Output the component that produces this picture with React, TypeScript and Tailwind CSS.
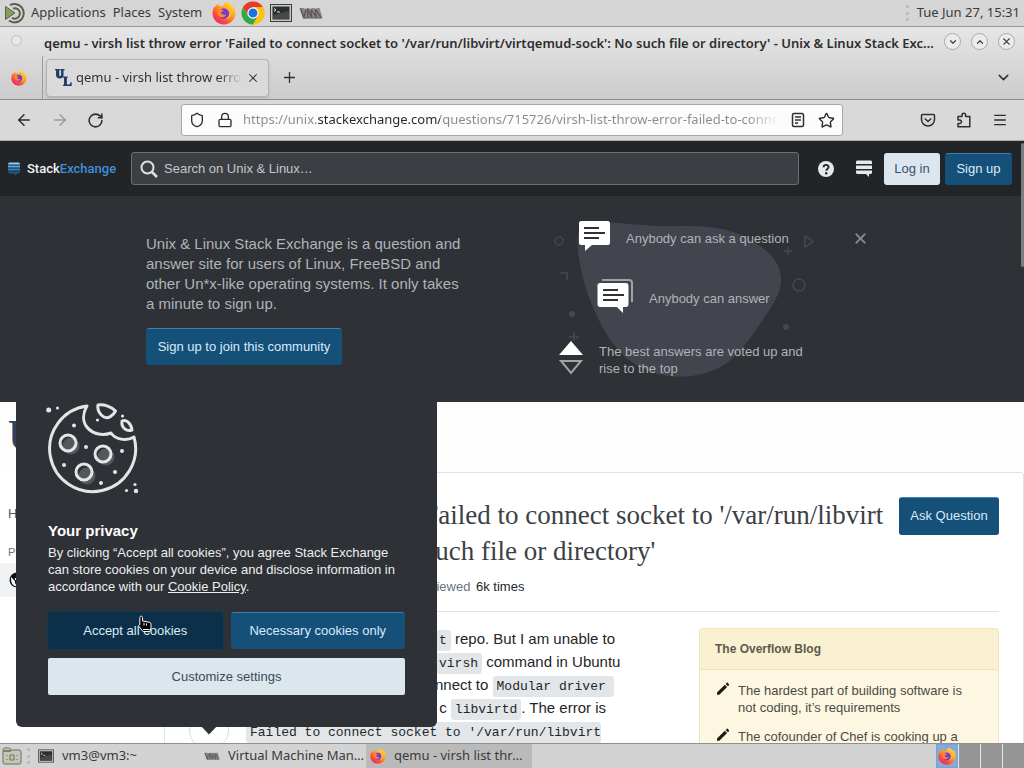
import type { ReactNode } from "react";
import {
  ArrowLeft,
  ArrowRight,
  ChevronDown,
  ChevronUp,
  Lock,
  Menu,
  Plus,
  RotateCw,
  Shield,
  Star,
  X,
} from "lucide-react";

const PAGE_FONT = "font-['Liberation_Sans',Arial,sans-serif]";
const CODE =
  "rounded-[3px] bg-[#e3e6e8] py-[3px] pl-1 font-['Liberation_Mono',monospace] text-[13px] leading-none text-[#232629]";
const PRIMARY =
  "rounded-[3px] border border-[#155079] border-t-[#3d7fae] bg-[#155079] text-[13px] text-[#d9eaf7] whitespace-nowrap";

function FirefoxIcon({ className }: { className?: string }) {
  return (
    <svg viewBox="0 0 24 24" className={className} aria-hidden="true">
      <defs>
        <linearGradient id="ffOuter" x1="0.85" y1="0.1" x2="0.2" y2="0.95">
          <stop offset="0" stopColor="#ffde3c" />
          <stop offset="0.4" stopColor="#ff9a25" />
          <stop offset="0.75" stopColor="#ff4a3d" />
          <stop offset="1" stopColor="#e8227d" />
        </linearGradient>
      </defs>
      <path
        d="M15.2 0.6c1.2 1.6 4.2 3.1 5.6 5.3 0-.9-.2-1.6-.5-2.2 2.1 2.1 3.2 5.2 3.2 8.4 0 6.4-5 11.4-11.5 11.4S.5 18.500.5 12.300c0-3 1-5.600 2.800-7.700 0 .6 0 1.200.2 1.700.6-1.700 1.500-3 2.700-3.700.1 1 .5 1.900 1 2.500 1.200-.4 2.500-.3 3.700.1C11.600 3.400 13.200 1.500 15.200.6z"
        fill="url(#ffOuter)"
      />
      <circle cx="12" cy="12.500" r="5.300" fill="#7a3bd0" />
      <path d="M5.500 9.500c2-1.700 4.500-1.200 6.300.6-1.500.2-2.300.8-3 1.700 1 2 3.200 2.600 5.400 1.600-.7 2.300-3.200 3.300-5.600 2.600-2.400-.7-3.700-3.600-3.100-6.500z" fill="#ff8a2a" />
      <path d="M12.500 7.200c2.600.3 4.600 2.300 4.800 5 .1 2.600-1.700 5-4.500 5.400 3.800.6 7-2 7-5.600 0-3.200-3.500-5.500-7.300-4.800z" fill="#ffb52e" />
    </svg>
  );
}

function ChromeIcon() {
  return (
    <svg viewBox="0 0 24 24" className="size-6" aria-hidden="true">
      <circle cx="12" cy="12" r="11.500" fill="#fbc116" />
      <path d="M2 6.300A11.500 11.500 0 0 1 22 6.300H12L7 14.800z" fill="#e33b2e" />
      <path d="M2 6.300A11.500 11.500 0 0 0 12 23.500l5-8.600-10 0z" fill="#2da94f" />
      <path d="M12 6.300H22A11.500 11.500 0 0 1 12 23.500l5-8.700z" fill="#fbc116" />
      <circle cx="12" cy="12" r="5.700" fill="#fff" />
      <circle cx="12" cy="12" r="4.500" fill="#1f6fe0" />
    </svg>
  );
}

function TerminalIcon({ className }: { className?: string }) {
  return (
    <svg viewBox="0 0 22 18" className={className} aria-hidden="true">
      <rect x="0.500" y="0.500" width="21" height="17" fill="#c9cbc7" stroke="#3c3e3b" />
      <rect x="2.500" y="2.500" width="17" height="13" fill="#2a2f2e" />
      <path d="M3 11l16-4v8H3z" fill="#454a49" />
      <path d="M4 4.500l2 1.500-2 1.500M7 8h3" stroke="#e8e8e8" strokeWidth="1" fill="none" />
    </svg>
  );
}

function VmmIcon({ className }: { className?: string }) {
  return (
    <svg viewBox="0 0 24 12" className={className} aria-hidden="true">
      <path d="M0.500 1h5l1 5 1-5h3l2 5V1h3l2 4V1h3l3 10H3.800z" fill="#8b8488" />
      <path d="M1.500 1.500l3.500 9 2-8.500M9 10.500L8.500 2l4 8L12 2l5 8-.5-8 5 8" stroke="#5b565d" strokeWidth="1.300" fill="none" />
      <path d="M4 11h19" stroke="#5d585c" />
    </svg>
  );
}

function MateIcon() {
  return (
    <svg viewBox="0 0 22 22" className="size-[22px]" fill="none" aria-hidden="true">
      <path d="M6 3.200A9.200 9.200 0 1 1 5 18.500" stroke="#56604a" strokeWidth="2" />
      <path d="M9 6.500A5.200 5.200 0 1 1 8 15.800" stroke="#56604a" strokeWidth="2" />
      <path d="M1.500 4.500L11 11l-9.500 6.500z" fill="#86a05c" stroke="#56604a" strokeLinejoin="round" />
    </svg>
  );
}

function WindowButton({ label, children }: { label: string; children: ReactNode }) {
  return (
    <button
      aria-label={label}
      className="flex size-[17px] items-center justify-center rounded-full border border-[#a9a9a9] bg-[#ececec] text-[#444]"
    >
      {children}
    </button>
  );
}

function DesktopPanel() {
  return (
    <div className="flex h-[27px] shrink-0 items-center border-b border-[#9a9a9a] bg-[#d5d5d5] pr-1 pl-1 text-[13px] text-[#3a3a3a]">
      <MateIcon />
      <nav className="ml-[5px] flex gap-[7px]">
        <button>Applications</button>
        <button>Places</button>
        <button>System</button>
      </nav>
      <div className="ml-2.5 flex items-center gap-[5px]">
        <FirefoxIcon className="size-6" />
        <ChromeIcon />
        <TerminalIcon className="h-[18px] w-[22px]" />
        <VmmIcon className="ml-0.5 h-3 w-6" />
      </div>
      <div className="mr-2 ml-auto h-4 w-[3px] border-l-[3px] border-dotted border-[#bcbcbc]" />
      <span>Tue Jun 27, 15:31</span>
    </div>
  );
}

function BrowserChrome() {
  return (
    <div className="shrink-0 text-[#2e2e2e]">
      <div className="bg-linear-to-b from-[#e6e6e6] to-[#cbcbcb]">
        <div className="flex h-[29px] items-center gap-2.5 px-[9px]">
          <span className="size-[17px] shrink-0 p-[2px]">
            <span className="block size-[11px] rounded-full border border-[#bdbdbd] bg-[#e9e9e9]" />
          </span>
          <h1 className="ml-2 min-w-0 flex-1 truncate pt-1 text-[13px] font-semibold">
            qemu - virsh list throw error 'Failed to connect socket to '/var/run/libvirt/virtqemud-sock': No such file or
            directory' - Unix &amp; Linux Stack Exchange — Mozilla Firefox
          </h1>
          <WindowButton label="Minimize">
            <ChevronDown size={10} strokeWidth={3} />
          </WindowButton>
          <WindowButton label="Maximize">
            <ChevronUp size={10} strokeWidth={3} />
          </WindowButton>
          <WindowButton label="Close">
            <X size={11} strokeWidth={2.5} />
          </WindowButton>
        </div>
        <div className="flex h-[44px] items-center border-b border-[#8c8c8c]">
          <div className="flex h-full w-[43px] items-center justify-center border-r border-[#9d9d9d] pr-1">
            <FirefoxIcon className="size-4" />
          </div>
          <div className="ml-[3px] flex h-[38px] w-[223px] items-center gap-1 rounded-[4px] border border-[#b3b3b3] bg-[#dadada] px-2 shadow-sm">
            <svg viewBox="0 0 16 16" className="size-[17px] shrink-0" aria-hidden="true" fill="#233b66">
              <path d="M0 0h4.500v1.200H4v4.400c0 1.500 1.700 1.500 1.700 0V1.200H5V0h4v1.200H8v4.900c0 3.700-7 3.700-7 0V1.200H0z" />
              <path d="M7.500 7h4.500v1.200h-.8v6.300h2.300c.6 0 .9-.6 1-2h1.200v3.500H7.500v-1.200h1V8.200h-1z" />
            </svg>
            <span className="min-w-0 flex-1 overflow-hidden bg-linear-to-r from-[#2e2e2e] from-85% to-[#dadada] bg-clip-text text-[13px] whitespace-nowrap text-transparent">
              qemu - virsh list throw error 'Failed
            </span>
            <button aria-label="Close tab">
              <X size={14} strokeWidth={1.8} />
            </button>
          </div>
          <button aria-label="New tab" className="ml-3">
            <Plus size={17} strokeWidth={1.8} />
          </button>
          <button aria-label="List all tabs" className="mr-3 ml-auto">
            <ChevronDown size={17} strokeWidth={2} />
          </button>
        </div>
      </div>
      <div className="flex h-[41px] items-center border-b border-[#aaa] bg-[#d9d9d9]">
        <div className="flex w-[181px] shrink-0 items-center gap-[18px] pl-[15px]">
          <button aria-label="Back">
            <ArrowLeft size={18} strokeWidth={2} />
          </button>
          <button aria-label="Forward" disabled className="text-[#9b9b9b]">
            <ArrowRight size={18} strokeWidth={2} />
          </button>
          <button aria-label="Reload">
            <RotateCw size={17} strokeWidth={2.2} />
          </button>
        </div>
        <div className="flex h-8 min-w-0 flex-1 items-center rounded-[3px] border border-[#a6a6a6] bg-[#fcfcfc] px-[7px]">
          <Shield size={16} strokeWidth={2} />
          <Lock size={16} strokeWidth={2} className="ml-3" />
          <input
            aria-label="Address"
            defaultValue="https://unix.stackexchange.com/questions/715726/virsh-list-throw-error-failed-to-connect-socket-to-var-run"
            className="ml-2.5 min-w-0 flex-1 bg-[linear-gradient(to_right,#8a8a8a_75px,#262626_75px,#262626_197px,#8a8a8a_197px,#8a8a8a_505px,#fcfcfc_535px)] bg-clip-text text-[13px] text-transparent outline-none"
          />
          <button aria-label="Reader view" className="ml-2">
            <svg viewBox="0 0 16 16" className="size-4" fill="none" stroke="currentColor" strokeWidth="1.500">
              <rect x="2.500" y="1.500" width="11" height="13" rx="1.500" />
              <path d="M5 5h6M5 8h6M5 11h3" />
            </svg>
          </button>
          <button aria-label="Bookmark" className="ml-3">
            <Star size={17} strokeWidth={2} />
          </button>
        </div>
        <div className="flex w-[181px] shrink-0 items-center justify-end gap-5 pr-4">
          <button aria-label="Save to Pocket">
            <svg viewBox="0 0 16 16" className="size-4" fill="none" stroke="currentColor" strokeWidth="1.500">
              <path d="M2.500 2.500h11c.6 0 1 .4 1 1V7.500a6.500 6.500 0 0 1-13 0v-4c0-.6.4-1 1-1z" />
              <path d="M4.800 6.500L8 9.500l3.200-3" />
            </svg>
          </button>
          <button aria-label="Extensions">
            <svg viewBox="0 0 16 16" className="size-4" fill="none" stroke="currentColor" strokeWidth="1.500" strokeLinejoin="round">
              <path d="M2 14.800V11.500h1.800a1.700 1.700 0 0 0 0-3.400H2V4.500h4V3a1.800 1.800 0 0 1 3.600 0v1.500h4.200v10.300z" />
            </svg>
          </button>
          <button aria-label="Menu">
            <Menu size={16} strokeWidth={2} />
          </button>
        </div>
      </div>
    </div>
  );
}

function SiteHeader() {
  return (
    <header className="flex h-[55px] items-center bg-[#222527] pr-3 pl-2">
      <a href="#" className="flex w-[123px] shrink-0 items-center gap-[7px]">
        <svg viewBox="0 0 12 14" className="h-3.5 w-3" aria-hidden="true">
          <path d="M0 2.500C0 1 1 .5 2 .5h8c1 0 2 .5 2 2z" fill="#8fd0f5" />
          <path d="M0 3.500h12v2H0z" fill="#4ea9e0" />
          <path d="M0 6.500h12v2H0z" fill="#2f83cc" />
          <path d="M0 9.500h12c0 1.300-1 2-2 2H9L7 13.500v-2H2c-1 0-2-.7-2-2z" fill="#24588f" />
        </svg>
        <span className="font-[Roboto,sans-serif] text-[13px] font-medium text-[#f3f3f3]">
          Stack<span className="text-[#3f8fd9]">Exchange</span>
        </span>
      </a>
      <label className="flex h-[33px] min-w-0 flex-1 items-center gap-1.5 rounded-[3px] border border-[#6a6f74] bg-[#3b3f43] pl-2">
        <svg viewBox="0 0 18 18" className="size-[18px] shrink-0" fill="none" stroke="#dfe2e4" strokeWidth="2">
          <circle cx="7.500" cy="7.500" r="6" />
          <path d="M12 12l5 5" strokeWidth="2.500" />
        </svg>
        <input
          aria-label="Search"
          placeholder="Search on Unix &amp; Linux…"
          className="min-w-0 flex-1 bg-transparent text-[13px] text-[#c8ccd0] outline-none placeholder:text-[#c3c7ca]"
        />
      </label>
      <button aria-label="Help" className="ml-[19px]">
        <svg viewBox="0 0 16 16" className="size-4">
          <circle cx="8" cy="8" r="8" fill="#e6e8ea" />
          <path d="M5.600 6.300c0-3.200 5-3.100 5-.2 0 1.700-2.300 1.900-2.300 3.700" fill="none" stroke="#222527" strokeWidth="1.900" />
          <circle cx="8.200" cy="12.200" r="1.200" fill="#222527" />
        </svg>
      </button>
      <button aria-label="Stack Exchange sites" className="mr-3 ml-[22px]">
        <svg viewBox="0 0 16 17" className="h-[17px] w-4" fill="#e6e8ea">
          <path d="M0 4V2C0 1 .8.500 1.500.500h13c.8 0 1.500.5 1.500 1.500v2zM0 5.500h16v3.500H0zM0 10.500h16v2c0 .9-.7 1.500-1.500 1.500H13v3l-3-3H1.500C.7 14 0 13.400 0 12.500z" />
        </svg>
      </button>
      <button className="h-8 w-14 rounded-[3px] bg-[#dce6ef] text-[13px] whitespace-nowrap text-[#37536b]">Log in</button>
      <button className={`${PRIMARY} ml-[5px] h-8 w-[67px]`}>Sign up</button>
    </header>
  );
}

function Hero() {
  return (
    <section className="flex h-[206px] items-start bg-[#2e3135] pt-6 pl-[146px] text-[#b0b4b8]">
      <div className="w-[406px] shrink-0 pt-3.5">
        <p className="w-[325px] text-[15px] leading-5">
          Unix &amp; Linux Stack Exchange is a question and answer site for users of Linux, FreeBSD and other Un*x-like
          operating systems. It only takes a minute to sign up.
        </p>
        <button className={`${PRIMARY} mt-3.5 h-[37px] w-[196px]`}>Sign up to join this community</button>
      </div>
      <div className="relative w-[290px] text-[13px] leading-[17px]">
        <svg viewBox="0 0 290 170" className="absolute top-0 left-0 h-[170px] w-[290px]" fill="none" aria-hidden="true">
          <path
            d="M26 30C24 8 28 2 50 2C75 3 95 7 130 6C160 5 185 10 200 21C222 34 229 46 229 60C229 76 217 90 204 110C188 133 175 148 150 154C125 160 100 156 80 142C56 128 30 74 26 30z"
            fill="#42454e"
          />
          <g stroke="#45494d" strokeWidth="1.500">
            <circle cx="7" cy="21" r="4" />
            <path d="M8 53h7v7M253 16v11l8-5.500zM236 27v8M232 31h8M22 112v9M17 117h10" />
            <circle cx="247" cy="65" r="6" />
          </g>
          <circle cx="20" cy="94" r="3" fill="#45494d" />
          <circle cx="234" cy="107" r="3" fill="#45494d" />
        </svg>
        <ul className="relative">
          <li className="flex h-[59px] items-start gap-[15px] pl-[27px]">
            <svg viewBox="0 0 32 32" className="size-8 shrink-0" aria-hidden="true">
              <path d="M2 1h27c1 0 2 1 2 2v20c0 1-1 2-2 2H13l-7 6V25H2c-1 0-2-1-2-2V3c0-1 1-2 2-2z" fill="#fff" />
              <path d="M5 8h15M5 13h21M5 18h15" stroke="#2f3236" strokeWidth="2" />
            </svg>
            <span className="mt-2.5">Anybody can ask a question</span>
          </li>
          <li className="flex h-[61px] items-start gap-4 pl-[45px]">
            <svg viewBox="0 0 36 34" className="h-[34px] w-9 shrink-0" aria-hidden="true">
              <path d="M5 1h27c2 0 3 1 3 3v19" stroke="#9fa3a8" strokeWidth="2" fill="none" />
              <path d="M3 4h26c1.500 0 2.500 1 2.500 2.500v19c0 1.500-1 2.500-2.500 2.500h-3v6l-6-6H3c-1.500 0-2.500-1-2.500-2.500v-19C.5 5 1.500 4 3 4z" fill="#fff" />
              <path d="M6 11h15M6 16h21M6 21h15" stroke="#2f3236" strokeWidth="2" />
            </svg>
            <span className="mt-[11px]">Anybody can answer</span>
          </li>
          <li className="flex items-start gap-[15px] pl-1.5">
            <svg viewBox="0 0 26 36" className="h-9 w-[26px] shrink-0" aria-hidden="true">
              <path d="M13 1l12 14H1z" fill="#fff" />
              <path d="M3 21h20L13 33z" fill="none" stroke="#9fa3a8" strokeWidth="2" />
            </svg>
            <span className="mt-[3px] w-[215px]">The best answers are voted up and rise to the top</span>
          </li>
        </ul>
      </div>
      <button aria-label="Dismiss" className="mt-2.5 ml-2.5 text-[#84888c]">
        <X size={17} strokeWidth={2.5} />
      </button>
    </section>
  );
}

const POSTS = ["The hardest part of building software is not coding, it’s requirements", "The cofounder of Chef is cooking up a less painful DevOps"];

function BlogBox() {
  return (
    <aside className="mt-4 w-[300px] shrink-0 rounded-[3px] border border-[#f0e4b8] bg-[#fdf7e2] text-[#4b4a42]">
      <h2 className="flex h-[41px] items-center border-b border-[#f0e4b8] bg-[#faf1d2] px-[15px] text-[12px] font-bold text-[#5d5a4c]">
        The Overflow Blog
      </h2>
      <ul className="flex flex-col gap-3 py-3 pr-4 pl-4 text-[13px] leading-[17px]">
        {POSTS.map((post) => (
          <li key={post} className="flex items-start gap-2">
            <svg viewBox="0 0 14 14" className="size-3.5 shrink-0" fill="#1b1b18" aria-hidden="true">
              <path d="M1 10.500L8.800 2.700l2.300 2.300L3.300 12.800H1zM9.600 1.900l1-1c.4-.4.9-.4 1.200 0l1.100 1.100c.4.4.4.9 0 1.200l-1 1z" />
            </svg>
            <span>{post}</span>
          </li>
        ))}
      </ul>
    </aside>
  );
}

function BodyLine({ lead, children }: { lead: string; children: ReactNode }) {
  return (
    <div className="flex whitespace-pre">
      <span className="w-[189px] shrink-0 overflow-hidden">{lead}</span>
      <span>{children}</span>
    </div>
  );
}

function Question() {
  return (
    <div className="flex">
      <nav className="w-[164px] shrink-0 text-[#525960]">
        <a href="#" className="mt-[33px] block pl-2 text-[13px] leading-[17px]">
          Home
        </a>
        <div className="mt-[22px] pl-2 text-[11px] leading-[17px] text-[#6a737c]">PUBLIC</div>
        <a href="#" className="mt-0.5 flex h-[34px] items-center gap-1 bg-[#f1f2f3] pl-2 text-[13px] font-bold text-[#0c0d0e]">
          <svg viewBox="0 0 18 18" className="size-[18px]" aria-hidden="true">
            <circle cx="9" cy="9" r="7.500" fill="#0c0d0e" />
            <path d="M3 6l4 4v2l2 3.500C5 15.500 2.500 12 3 6zM11 3v2L9 7H7v2h5v3h2c2-3 1-7-3-9z" fill="#f1f2f3" />
          </svg>
          Questions
        </a>
      </nav>
      <main className="min-w-0 flex-1 rounded-t-[3px] border border-[#dfe1e3] pt-6 pr-6 pl-6">
        <div className="flex items-start justify-between border-b border-[#e0e2e4] pb-4">
          <div>
            <h1 className="font-['Liberation_Serif',serif] text-[27px] leading-9 whitespace-nowrap text-[#3b4045]">
              virsh list throw error 'Failed to connect socket to '/var/run/libvirt
              <br />
              /virtqemud-sock': No such file or directory'
            </h1>
            <div className="mt-[9px] flex gap-4 text-[13px] leading-[17px] text-[#6a737c]">
              <span className="w-[106px] overflow-hidden whitespace-nowrap">Asked 1 year ago</span>
              <span className="w-[101px] overflow-hidden whitespace-nowrap">Modified today</span>
              <span>
                Viewed <span className="ml-0.5 text-[#232629]">6k times</span>
              </span>
            </div>
          </div>
          <button className={`${PRIMARY} h-[38px] w-[100px]`}>Ask Question</button>
        </div>
        <div className="flex justify-between">
          <div className="flex">
            <div className="w-[57px] shrink-0 pt-[98px]">
              <button aria-label="Vote down" className="flex size-10 items-center justify-center rounded-full border border-[#d6d9dc]">
                <svg viewBox="0 0 18 10" className="h-2.5 w-[18px]">
                  <path d="M0 0h18L9 9.500z" fill="#2f3236" />
                </svg>
              </button>
            </div>
            <div className="pt-[15px] text-[15px] leading-[23px] text-[#232629]">
              <BodyLine lead="I have installed the">
                <code className={`${CODE} pr-1`}>t</code> repo. But I am unable to
              </BodyLine>
              <BodyLine lead="connect to it with">
                <code className={`${CODE} pr-1`}>virsh</code> command in Ubuntu
              </BodyLine>
              <BodyLine lead="22.04. I want to co">
                nnect to <code className={CODE}>Modular driver </code>
              </BodyLine>
              <BodyLine lead="and not monolithi">
                {" "}c <code className={`${CODE} pr-1`}>libvirtd</code>. The error is
              </BodyLine>
              <code className={CODE}>Failed to connect socket to '/var/run/libvirt</code>
            </div>
          </div>
          <BlogBox />
        </div>
      </main>
    </div>
  );
}

function CookieArt() {
  return (
    <svg viewBox="0 0 94 94" className="-ml-0.5 size-[94px]" fill="none" stroke="#e3e6e8" strokeWidth="3" strokeLinejoin="round" aria-hidden="true">
      <path d="M41 3A43 43 0 1 0 88 34C80 39 69 36 65 30C48 36 30 22 41 3z" />
      <path d="M52 2C58 1 66 4 69.500 8C67 13 62 16 58 14C54 12 51 7 52 2z" />
      <path d="M76 18C80 16 85 20 86 27C81 29 75 25 76 18z" />
      <g fill="#54575c" stroke="none">
        <circle cx="25" cy="43" r="8.500" />
        <circle cx="60" cy="54" r="8.500" />
        <circle cx="41" cy="73" r="8.500" />
      </g>
      <circle cx="22" cy="40" r="8" />
      <circle cx="57" cy="51" r="8" />
      <circle cx="38" cy="69" r="8" />
      <g fill="#e3e6e8" stroke="none">
        <circle cx="2.700" cy="7" r="2.500" />
        <circle cx="11.500" cy="5" r="1.600" />
        <circle cx="28" cy="22.500" r="2" />
        <circle cx="51.500" cy="17" r="1.600" />
        <circle cx="76.500" cy="13" r="1.600" />
        <circle cx="40" cy="44" r="2" />
        <circle cx="76" cy="48" r="2" />
        <circle cx="18" cy="62" r="2" />
        <circle cx="69" cy="69" r="2" />
        <circle cx="55" cy="80" r="2" />
        <circle cx="89" cy="81.500" r="1.600" />
        <circle cx="80.500" cy="87.500" r="1.600" />
        <circle cx="90" cy="88" r="2.200" />
      </g>
    </svg>
  );
}

function CookieDialog() {
  return (
    <div
      role="dialog"
      aria-label="Your privacy"
      className="absolute bottom-4 left-4 w-[421px] rounded-[6px] bg-[#2e3135] p-8 text-[13px] leading-[17px] text-[#eceef0]"
    >
      <CookieArt />
      <h2 className="mt-6 text-[15px] leading-5 font-bold text-white">Your privacy</h2>
      <p className="mt-[3px]">
        By clicking “Accept all cookies”, you agree Stack Exchange can store cookies on your device and disclose
        information in accordance with our{" "}
        <a href="#" className="underline">
          Cookie Policy
        </a>
        .
      </p>
      <div className="mt-[17px] grid grid-cols-2 gap-x-2 gap-y-[9px]">
        <button className="relative h-[37px] rounded-[3px] bg-[#0c3049] text-[#d9eaf7] ring-1 ring-[#153850]">
          Accept all cookies
          <svg viewBox="0 0 16 18" className="absolute top-[3px] left-[89px] h-[18px] w-4" aria-hidden="true">
            <path
              d="M4 1.200c1 0 1.500.7 1.500 1.500V6l6.500 1.200c1.200.2 2 .8 2 2V13l-1.300 3.500H6.200L2 11.500c-.7-1-.2-1.800.8-1.800V2.700c0-.8.4-1.500 1.200-1.500z"
              fill="#050505"
              stroke="#fff"
            />
            <path d="M6 14.500h6.500M7 8v2.500M9.500 8.500v2" stroke="#fff" />
          </svg>
        </button>
        <button className={`${PRIMARY} h-[37px]`}>Necessary cookies only</button>
        <button className="col-span-2 h-[37px] rounded-[2px] bg-[#dce6ed] text-[#3b4a59]">Customize settings</button>
      </div>
    </div>
  );
}

function TaskButton({ icon, label, active }: { icon: ReactNode; label: string; active?: boolean }) {
  return (
    <button className={`flex h-full w-[166px] items-center gap-2 pl-1 text-left ${active ? "bg-[#bababa] pr-2" : ""}`}>
      {icon}
      <span className="min-w-0 truncate">{label}</span>
    </button>
  );
}

function Taskbar() {
  return (
    <div className="flex h-[25px] shrink-0 items-center border-t border-[#8f8f8f] bg-[#d3d3d3] text-[13px] text-[#3a3a3a]">
      <svg viewBox="0 0 20 18" className="ml-0.5 h-[18px] w-5" aria-hidden="true">
        <path d="M1 3.500C1 2 1.500 1 3 1h4.500l1.500 2h8c1.300 0 2 .7 2 2v10c0 1.300-.7 2-2 2H3c-1.300 0-2-.7-2-2z" fill="#c3c7b4" stroke="#6b6f60" />
        <path d="M1 3h8v2H1z" fill="#7c806e" />
        <path d="M8 8h4v5H8zM5 8v1M5 12v1M15 8v1M15 12v1" stroke="#6b6f60" fill="none" />
      </svg>
      <div className="mr-1 ml-[5px] h-4 w-[3px] border-l-[3px] border-dotted border-[#bcbcbc]" />
      <div className="flex h-full min-w-0 flex-1">
        <TaskButton icon={<TerminalIcon className="h-3.5 w-4 shrink-0" />} label="vm3@vm3:~" />
        <TaskButton icon={<VmmIcon className="h-2 w-4 shrink-0" />} label="Virtual Machine Manager" />
        <TaskButton icon={<FirefoxIcon className="size-4 shrink-0" />} label="qemu - virsh list throw error" active />
      </div>
      <div className="flex h-full shrink-0 gap-px bg-[#e8e8e8]">
        <div className="flex w-[22px] items-center justify-center border border-[#6ea4e0] bg-[#8ba9d0]">
          <FirefoxIcon className="size-[18px]" />
        </div>
        <div className="w-[21px] bg-[#959595]" />
        <div className="w-[21px] bg-[#959595]" />
        <div className="w-[21px] bg-[#959595]" />
      </div>
    </div>
  );
}

export default function App() {
  return (
    <div className="flex h-screen flex-col overflow-hidden font-['Noto_Sans',sans-serif]">
      <DesktopPanel />
      <BrowserChrome />
      <div className={`relative min-h-0 flex-1 overflow-hidden bg-white ${PAGE_FONT}`}>
        <SiteHeader />
        <Hero />
        <div className="h-[70px] bg-[#fdfdfd] pt-3 pl-2">
          <a href="#" className="font-['Liberation_Serif',serif] text-[44px] leading-[44px] font-bold text-[#2a4265]">
            Unix &amp; Linux
          </a>
        </div>
        <Question />
        <CookieDialog />
        <div className="absolute top-0.5 right-0 h-[124px] w-[3px] rounded-full bg-[#7b7d7f]" />
      </div>
      <Taskbar />
    </div>
  );
}
